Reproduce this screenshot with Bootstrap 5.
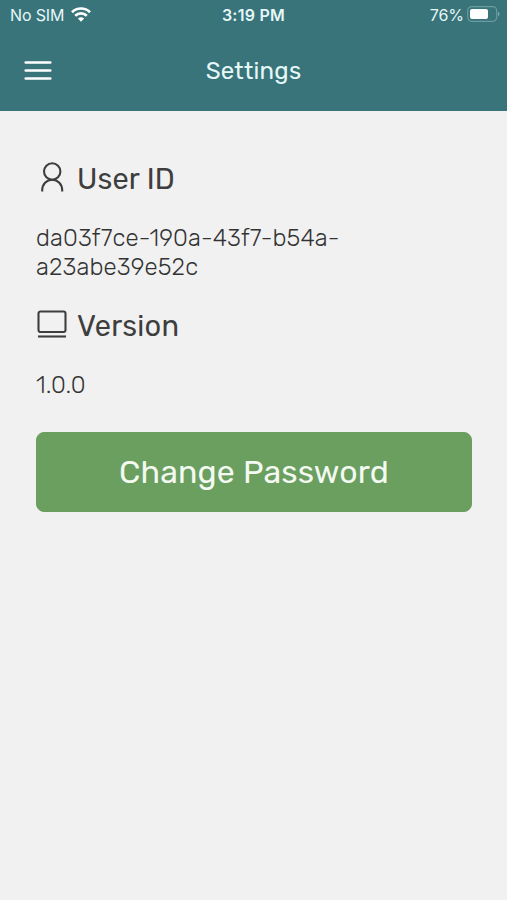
<!DOCTYPE html>
<html lang="en">
<head>
<meta charset="utf-8">
<meta name="viewport" content="width=device-width, initial-scale=1">
<title>Settings</title>
<link rel="stylesheet" href="https://cdn.jsdelivr.net/npm/bootstrap@5.3.0/dist/css/bootstrap.min.css">
<style>
body{background:#f1f1f1;color:#3e3e3e;font-family:Rubik,Roboto,sans-serif;min-height:100vh}
svg{display:block;flex:none}
.app-header{background:#387479;color:#e6f7f8;height:111px}
.status-bar{height:30px;font:400 16px/30px Inter,sans-serif;padding:0 7px 0 10px}
.status-side{width:150px}
.sim{letter-spacing:-.15px}
.wifi{margin:0 0 2px 7px}
.clock{font-weight:600;letter-spacing:.25px;margin-left:-3px}
.battery-pct{letter-spacing:-.1px}
.battery{margin:0 0 2px 3px}
.title-bar{height:81px;padding:0 24px}
.bar-side{width:28px}
.menu-btn{background:none;border:0;color:#fff}
.page-title{font-size:24px;line-height:30px;letter-spacing:.22px}
.content{padding:50px 35px 0 36px}
.section-title{font-size:29px;line-height:36px;letter-spacing:.2px}
.icon-box{width:41px;padding-bottom:2px}
.value{font-size:24px;line-height:29px;font-weight:300;letter-spacing:.12px;color:#333}
.user-value{margin:27px 0 26px}
.version-value{margin:27px 0 32px}
.btn-change{--bs-btn-bg:#6b9f60;--bs-btn-border-color:#6b9f60;--bs-btn-color:#f4f9f2;--bs-btn-hover-bg:#5f9154;--bs-btn-hover-color:#fff;height:80px;border-radius:8px;font-size:32px;letter-spacing:.18px}
</style>
<script src="https://cdn.jsdelivr.net/npm/bootstrap@5.3.0/dist/js/bootstrap.bundle.min.js" defer></script>
</head>
<body>
<header class="app-header">
  <div class="status-bar d-flex justify-content-between">
    <div class="status-side d-flex align-items-center">
      <span class="sim">No SIM</span>
      <svg class="wifi" width="20" height="15" viewBox="0 0 20 15" fill="none" stroke="#fff" stroke-width="2.7"><path d="M1 5.2a12.8 12.8 0 0 1 18 0"/><path d="M4.2 8.7a8.3 8.3 0 0 1 11.6 0"/><path d="M10 14.8 6.9 11.6a4.5 4.5 0 0 1 6.2 0Z" fill="#fff" stroke="none"/></svg>
    </div>
    <span class="clock">3:19 PM</span>
    <div class="status-side d-flex align-items-center justify-content-end">
      <span class="battery-pct">76%</span>
      <svg class="battery" width="33" height="16" viewBox="0 0 33 16" fill="none"><rect x=".7" y=".7" width="29" height="14.6" rx="4" stroke="#6c9b9f" stroke-width="1.2"/><rect x="3" y="3" width="18" height="10" rx="2" fill="#fff"/><path d="M31 5.5q3 2.5 0 5Z" fill="#7fa9ac"/></svg>
    </div>
  </div>
  <div class="title-bar d-flex align-items-center justify-content-between">
    <button class="menu-btn bar-side p-0" type="button" aria-label="Menu"><svg width="28" height="20" viewBox="0 0 28 20" stroke="#fff" stroke-width="2.6" stroke-linecap="round"><path d="M1.7 1.500h24.600M1.700 9.500h24.600M1.700 17.500h24.600"/></svg></button>
    <h1 class="page-title fw-normal m-0">Settings</h1>
    <span class="bar-side"></span>
  </div>
</header>
<main class="content">
  <h2 class="section-title fw-normal d-flex align-items-center m-0">
    <span class="icon-box"><svg width="32" height="32" viewBox="0 0 32 32" fill="none" stroke="#3e3e3e" stroke-width="2.1"><circle cx="16.200" cy="9.500" r="8.200"/><path d="M6.200 29.500v-1.200c0-6 4.300-10.600 10-10.600s10 4.600 10 10.600v1.200"/></svg></span><span>User ID</span>
  </h2>
  <p class="value user-value">da03f7ce-190a-43f7-b54a-<br>a23abe39e52c</p>
  <h2 class="section-title fw-normal d-flex align-items-center m-0">
    <span class="icon-box"><svg width="32" height="30" viewBox="0 0 32 30" fill="none" stroke="#3e3e3e" stroke-width="2.100"><rect x="2.500" y="1.500" width="27" height="20.500" rx="2"/><path d="M2 26.500h28"/></svg></span><span>Version</span>
  </h2>
  <p class="value version-value">1.0.0</p>
  <button class="btn btn-change w-100 p-0" type="button">Change Password</button>
</main>
</body>
</html>
